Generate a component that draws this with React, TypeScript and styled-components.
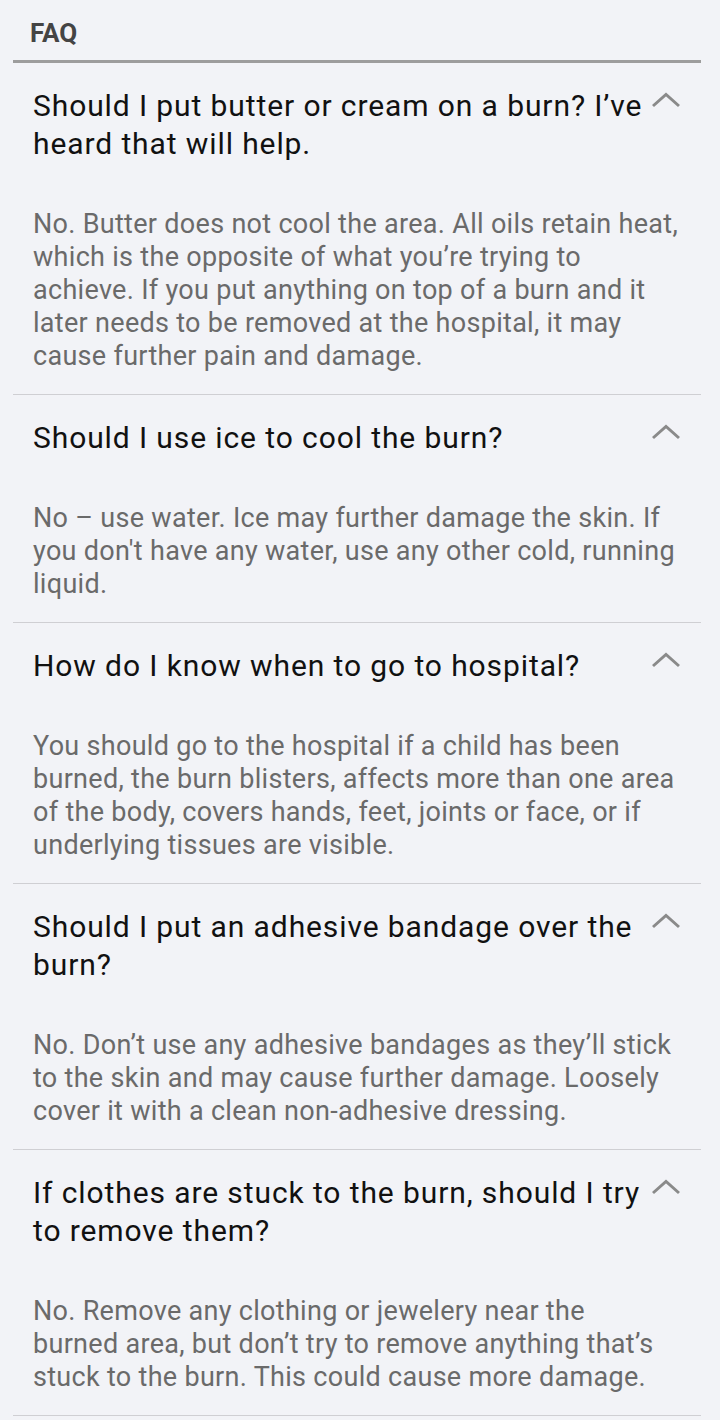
import React from "react";
import styled, { createGlobalStyle } from "styled-components";

const Global = createGlobalStyle`
  html, body {
    margin: 0;
    padding: 0;
    background: #f2f3f7;
  }
  body {
    font-family: Roboto, "Noto Sans", "Liberation Sans", sans-serif;
    -webkit-font-smoothing: antialiased;
  }
`;

const Page = styled.div`
  background: #f2f3f7;
  min-height: 1420px;
  padding: 0 19px 0 13px;
  box-sizing: border-box;
`;

const Header = styled.h1`
  margin: 0;
  padding: 18px 0 0 17px;
  height: 63px;
  box-sizing: border-box;
  font-size: 26px;
  font-weight: 700;
  color: #444;
  line-height: 30px;
  border-bottom: 3px solid #9d9d9d;
`;

const List = styled.div`
  display: flex;
  flex-direction: column;
`;

const Item = styled.section`
  border-bottom: 1px solid #cfcfd3;
  padding: 24px 20px 21px 20px;
`;

const QuestionRow = styled.div`
  display: flex;
  align-items: flex-start;
  justify-content: space-between;
  gap: 3px;
`;

const Question = styled.h2`
  margin: 0;
  font-size: 30px;
  font-weight: 400;
  letter-spacing: 0.9px;
  line-height: 38px;
  color: #111;
  flex: 1;
  max-width: 615px;
`;

const Chevron = styled.svg`
  flex: none;
  width: 30px;
  height: 16px;
  margin-top: 5px;
`;

const Answer = styled.p`
  margin: 45px 0 0 0;
  font-size: 27px;
  letter-spacing: 0.3px;
  line-height: 33px;
  color: #6a6a6a;
`;

const AnswerLine = styled.span`
  display: block;
  white-space: nowrap;
`;

const faqs = [
  {
    q: "Should I put butter or cream on a burn? I\u2019ve heard that will help.",
    a: [
      "No. Butter does not cool the area. All oils retain heat,",
      "which is the opposite of what you\u2019re trying to",
      "achieve. If you put anything on top of a burn and it",
      "later needs to be removed at the hospital, it may",
      "cause further pain and damage.",
    ],
  },
  {
    q: "Should I use ice to cool the burn?",
    a: [
      "No \u2013 use water. Ice may further damage the skin. If",
      "you don't have any water, use any other cold, running",
      "liquid.",
    ],
  },
  {
    q: "How do I know when to go to hospital?",
    a: [
      "You should go to the hospital if a child has been",
      "burned, the burn blisters, affects more than one area",
      "of the body, covers hands, feet, joints or face, or if",
      "underlying tissues are visible.",
    ],
  },
  {
    q: "Should I put an adhesive bandage over the burn?",
    a: [
      "No. Don\u2019t use any adhesive bandages as they\u2019ll stick",
      "to the skin and may cause further damage. Loosely",
      "cover it with a clean non-adhesive dressing.",
    ],
  },
  {
    q: "If clothes are stuck to the burn, should I try to remove them?",
    a: [
      "No. Remove any clothing or jewelery near the",
      "burned area, but don\u2019t try to remove anything that\u2019s",
      "stuck to the burn. This could cause more damage.",
    ],
  },
];

export default function App() {
  return (
    <>
      <Global />
      <Page>
        <Header>FAQ</Header>
        <List>
          {faqs.map((f, i) => (
            <Item key={i}>
              <QuestionRow>
                <Question>{f.q}</Question>
                <Chevron viewBox="0 0 30 16" aria-hidden="true">
                  <path d="M2 14 L15 2.5 L28 14" fill="none" stroke="#8a8a8a" strokeWidth="3" />
                </Chevron>
              </QuestionRow>
              <Answer>
                {f.a.map((line, j) => (
                  <AnswerLine key={j}>{line}</AnswerLine>
                ))}
              </Answer>
            </Item>
          ))}
        </List>
      </Page>
    </>
  );
}
